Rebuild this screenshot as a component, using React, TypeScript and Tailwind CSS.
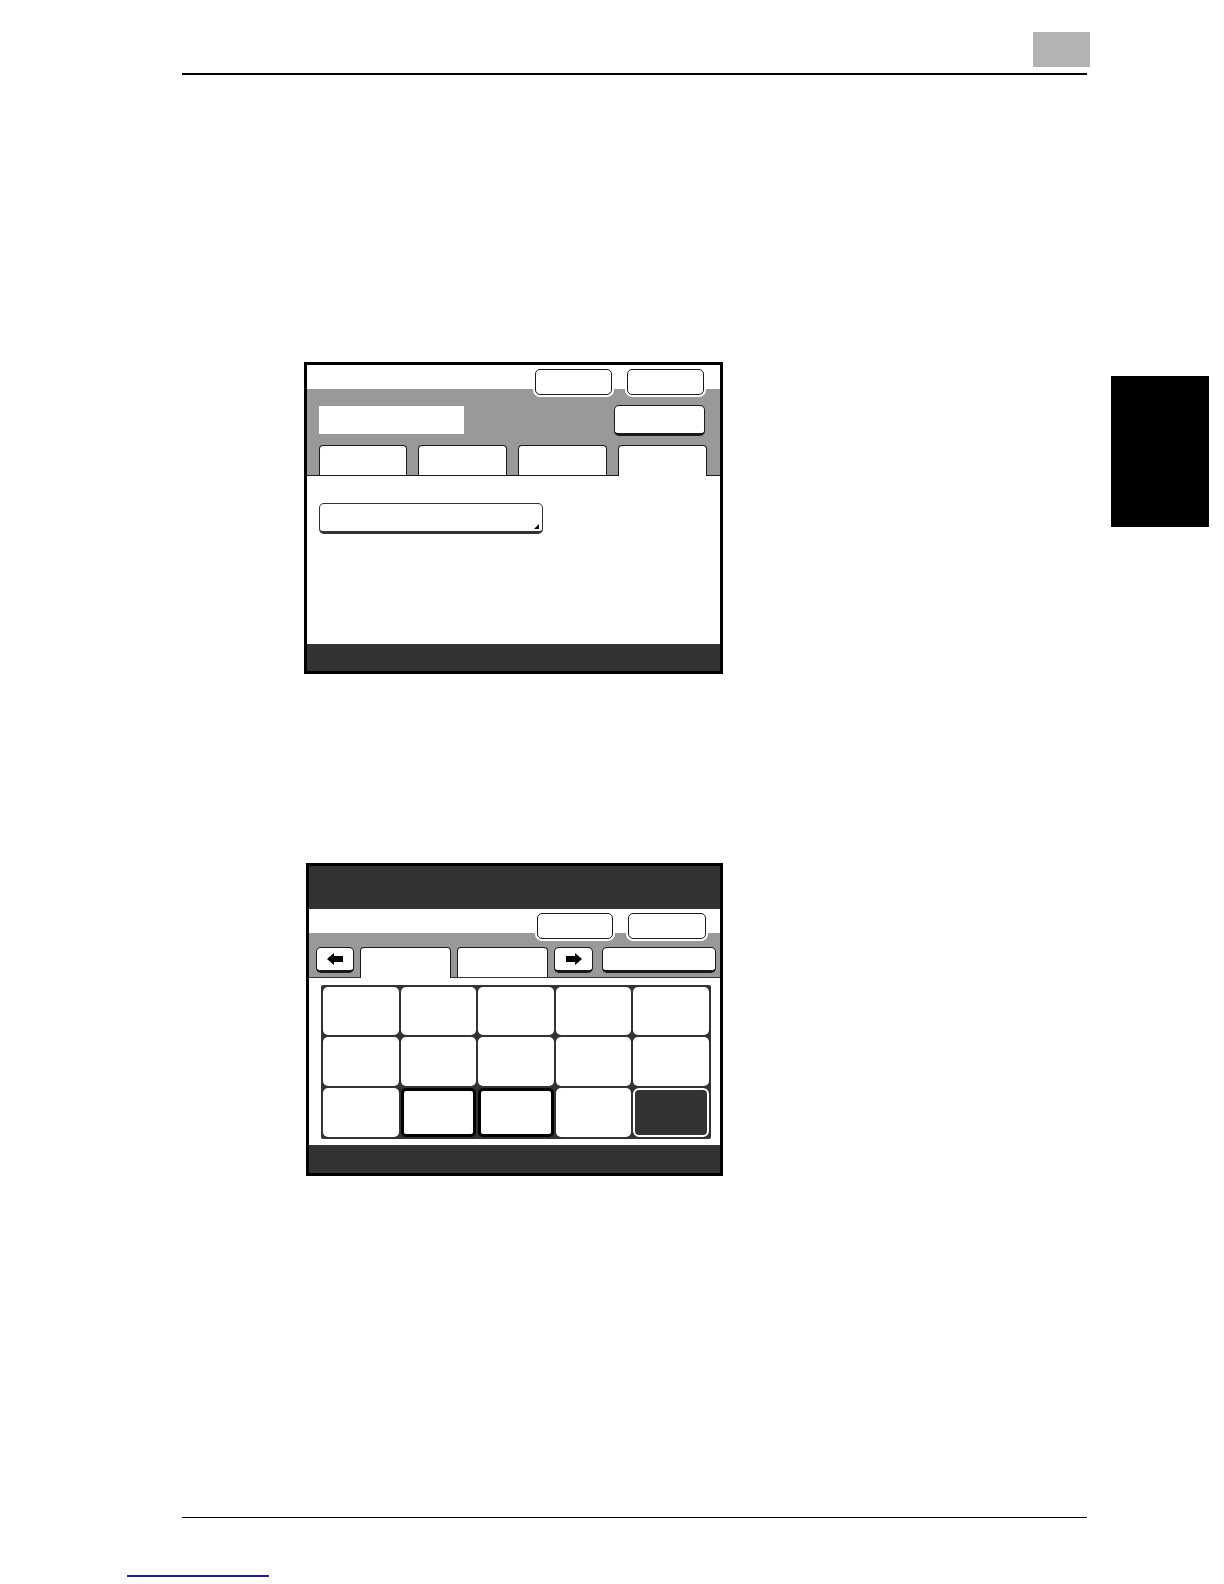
import React from 'react';

// shared pieces of the touch-panel drawings
function PanelButton({ className = '', halo = false, raised = false, children }: { className?: string; halo?: boolean; raised?: boolean; children?: React.ReactNode }) {
  return (
    <div
      className={`relative flex items-center justify-center bg-white rounded-[5px] border-[1.5px] border-[#1a1a1a] ${raised ? 'border-b-[3.5px]' : ''} ${halo ? 'shadow-[0_0_0_2px_#ffffff]' : ''} ${className}`}
    >
      {children}
    </div>
  );
}

function Tab({ className = '', active = false }: { className?: string; active?: boolean }) {
  return (
    <div
      className={`bg-white rounded-t-[4px] border-[1.5px] border-b-0 border-[#1a1a1a] ${active ? '-mb-px h-[31px]' : 'h-[30px]'} ${className}`}
    />
  );
}

function Arrow({ dir }: { dir: 'left' | 'right' }) {
  return (
    <svg width="16" height="12" viewBox="0 0 16 12" className={dir === 'right' ? 'scale-x-[-1]' : ''}>
      <polygon points="0,6 7,0 7,3 16,3 16,9 7,9 7,12" fill="#000" />
    </svg>
  );
}

function SettingsScreen() {
  return (
    <div className="ml-[304px] mt-[287px] w-[419px] h-[312px] border-[3px] border-black flex flex-col">
      <div className="h-[111px] bg-[linear-gradient(to_bottom,#ffffff_24px,#999999_24px)] flex flex-col">
        <div className="flex justify-end gap-[15px] pr-[16px] pt-[4px]">
          <PanelButton halo className="w-[77px] h-[26px]" />
          <PanelButton halo className="w-[77px] h-[26px]" />
        </div>
        <div className="flex items-start justify-between pl-[12px] pr-[15px] mt-[10px]">
          <div className="w-[145px] h-[28px] bg-white mt-[1px]" />
          <PanelButton raised className="w-[91px] h-[31px]" />
        </div>
        <div className="mt-auto flex items-end gap-[11px] px-[12px] border-b border-[#1a1a1a]">
          <Tab className="w-[88px]" />
          <Tab className="w-[89px]" />
          <Tab className="w-[89px]" />
          <Tab active className="w-[89px]" />
        </div>
      </div>
      <div className="flex-1 bg-white pt-[27px] pl-[12px]">
        <div className="relative w-[224px] h-[31px] bg-white rounded-[5px] border-[1.5px] border-b-[3px] border-[#333]">
          <svg width="5" height="5" viewBox="0 0 5 5" className="absolute right-[3px] bottom-[2px]">
            <polygon points="5,0 5,5 0,5" fill="#000" />
          </svg>
        </div>
      </div>
      <div className="h-[27px] bg-[#333333]" />
    </div>
  );
}

function KeypadScreen() {
  const cells = Array.from({ length: 15 }, (_, i) => i);
  return (
    <div className="ml-[306px] mt-[189px] w-[417px] h-[313px] border-[3px] border-black flex flex-col">
      <div className="h-[43px] bg-[#333333]" />
      <div className="h-[69px] bg-[linear-gradient(to_bottom,#ffffff_24px,#999999_24px)] flex flex-col">
        <div className="flex justify-end gap-[15px] pr-[14px] pt-[4px]">
          <PanelButton halo className="w-[76px] h-[26px]" />
          <PanelButton halo className="w-[78px] h-[26px]" />
        </div>
        <div className="mt-auto flex items-end pl-[7px] border-b border-[#333]">
          <PanelButton raised className="w-[38px] h-[26px] mb-[4px]">
            <Arrow dir="left" />
          </PanelButton>
          <Tab active className="w-[91px] ml-[6px]" />
          <Tab className="w-[91px] ml-[6px]" />
          <PanelButton raised className="w-[39px] h-[26px] mb-[4px] ml-[6px]">
            <Arrow dir="right" />
          </PanelButton>
          <PanelButton raised className="w-[114px] h-[26px] mb-[4px] ml-[9px]" />
        </div>
      </div>
      <div className="flex-1 bg-white pt-[7px] pl-[12px]">
        <div className="w-[390px] h-[154px] grid grid-cols-5 grid-rows-3 gap-[2px] p-[2px] bg-[#333333] rounded-[2px]">
          {cells.map((i) => {
            if (i === 11 || i === 12) {
              return <div key={i} className="bg-white rounded-[5px] border-[3px] border-black" />;
            }
            if (i === 14) {
              return <div key={i} className="bg-[#333333] rounded-[6px] border-[2px] border-white" />;
            }
            return <div key={i} className="bg-white rounded-[5px]" />;
          })}
        </div>
      </div>
      <div className="h-[28px] bg-[#333333]" />
    </div>
  );
}

export default function App() {
  return (
    <div className="relative w-[1224px] h-[1584px] bg-white overflow-hidden font-['Liberation_Sans',Arial,sans-serif]">
      {/* running head */}
      <header className="ml-[182px] w-[908px] pt-[32px]">
        <div className="flex justify-end">
          <div className="w-[57px] h-[35px] bg-[#b3b3b3]" />
        </div>
        <div className="mt-[6px] h-[1.5px] w-[905px] bg-black" />
      </header>

      {/* chapter thumb tab */}
      <aside className="absolute left-[1111px] top-[376px] w-[98px] h-[151px] bg-black" />

      <main>
        <SettingsScreen />
        <KeypadScreen />
      </main>

      <footer>
        <div className="ml-[182px] mt-[341px] h-[1.5px] w-[905px] bg-black" />
        <div className="ml-[127px] mt-[57px] h-[1.5px] w-[142px] bg-[#1c1c9c]" />
      </footer>
    </div>
  );
}
